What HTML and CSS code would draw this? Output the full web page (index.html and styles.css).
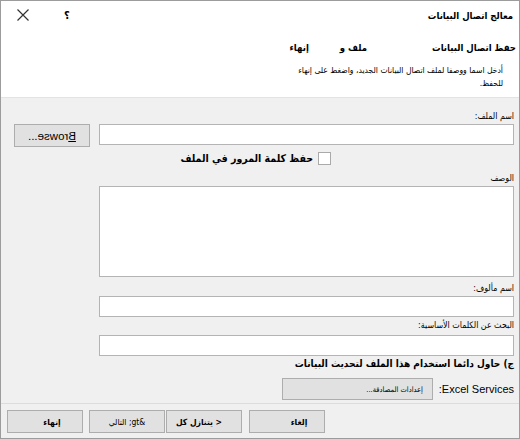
FILE: index.html
```html
<!DOCTYPE html>
<html lang="ar" dir="rtl">
<head>
<meta charset="utf-8">
<link rel="stylesheet" href="styles.css">
</head>
<body>
<div class="dialog">
  <div class="header">
    <div class="titlebar">
      <span class="title">معالج اتصال البيانات</span>
      <span class="help">؟</span>
      <span class="close">
        <svg width="12" height="12" viewBox="0 0 12 12"><path d="M0.5 0.5 L11.5 11.5 M11.5 0.5 L0.5 11.5" stroke="#333" stroke-width="1.2" fill="none"/></svg>
      </span>
    </div>
    <div class="steps">
      <span class="step step-main">حفظ اتصال البيانات</span>
      <span class="step step-file">ملف و</span>
      <span class="step step-end">إنهاء</span>
    </div>
    <p class="desc">أدخل اسما ووصفا لملف اتصال البيانات الجديد، واضغط على إنهاء<br>للحفظ.</p>
  </div>
  <div class="body">
    <label class="lbl lbl-file">اسم الملف:</label>
    <div class="file-row">
      <input class="field" type="text">
      <button class="btn browse"><span class="mirror"><u>B</u>rowse...</span></button>
    </div>
    <div class="check-row">
      <span class="checkbox"></span>
      <span class="check-label">حفظ كلمة المرور في الملف</span>
    </div>
    <label class="lbl lbl-desc">الوصف</label>
    <div class="field area"></div>
    <label class="lbl lbl-friendly">اسم مألوف:</label>
    <input class="field" type="text">
    <label class="lbl lbl-search">البحث عن الكلمات الأساسية:</label>
    <input class="field" type="text">
    <div class="always">ج) حاول دائما استخدام هذا الملف لتحديث البيانات</div>
    <div class="excel-row">
      <span class="excel-label">Excel Services:</span>
      <button class="btn auth">إعدادات المصادقة...</button>
    </div>
  </div>
  <div class="footer">
    <button class="btn fbtn fbtn-cancel">إلغاء</button>
    <button class="btn fbtn fbtn-back">&lt; يتنازل كل</button>
    <button class="btn fbtn fbtn-next">&amp;gt; التالي</button>
    <button class="btn fbtn fbtn-finish">إنهاء</button>
  </div>
</div>
</body>
</html>
```
FILE: styles.css
```css
* { box-sizing: border-box; }
html, body { margin: 0; padding: 0; }
body {
  width: 520px;
  height: 439px;
  background: #f0f0f0;
  font-family: "DejaVu Sans Condensed", "DejaVu Sans", sans-serif;
  font-size: 9px;
  color: #000;
}
.dialog {
  width: 520px;
  height: 439px;
  border: 1px solid #9c9c9c;
  background: #f0f0f0;
  display: flex;
  flex-direction: column;
  direction: rtl;
}
.header {
  background: #fff;
  height: 97px;
  flex: none;
  border-bottom: 1px solid #e3e3e3;
  padding: 0 3px 0 6px;
}
.titlebar {
  display: flex;
  align-items: center;
  height: 28px;
}
.title {
  font-weight: bold;
  font-size: 9.5px;
  flex: 1;
  padding-right: 3px;
}
.help {
  font-size: 11px;
  font-weight: bold;
  margin-left: 35px;
}
.close {
  display: flex;
  margin-left: 10px;
}
.steps {
  display: flex;
  align-items: center;
  height: 36px;
  font-weight: bold;
  font-size: 9.5px;
}
.step-main { margin-left: 65px; }
.step-file { margin-left: 31px; }
.desc {
  margin: -1px 0 0;
  padding-right: 13px;
  font-size: 8.5px;
  line-height: 13px;
}
.body {
  flex: 1;
  padding: 11px 5px 0 0;
  display: flex;
  flex-direction: column;
  align-items: flex-start;
}
.lbl {
  display: block;
  font-size: 8.8px;
  height: 14px;
  line-height: 14px;
  margin-bottom: 1px;
}
.lbl-desc { margin-top: 2px; }
.lbl-friendly { margin-top: 4px; }
.lbl-search { margin-top: 1px; margin-bottom: 3px; }
.field {
  width: 415px;
  height: 21px;
  border: 1px solid #b4b4b4;
  background: #fff;
  padding: 0;
  margin: 0;
  font: inherit;
  outline: none;
  flex: none;
}
.area { height: 91px; }
.file-row {
  display: flex;
  align-items: flex-start;
  gap: 9px;
  height: 23px;
}
.btn {
  font: inherit;
  font-size: 8.5px;
  background: #e1e1e1;
  border: 1px solid #adadad;
  color: #000;
  padding: 0;
  margin: 0;
}
.browse {
  width: 76px;
  height: 23px;
}
.mirror {
  display: inline-block;
  direction: ltr;
  transform: scaleX(-1);
  font-family: "Liberation Sans", sans-serif;
  font-size: 11.5px;
}
.check-row {
  display: flex;
  align-items: center;
  height: 22px;
  padding-right: 183px;
  gap: 5px;
}
.checkbox {
  width: 13px;
  height: 13px;
  border: 1px solid #aaa;
  background: #fff;
}
.check-label {
  font-weight: bold;
  font-size: 10.5px;
}
.always {
  font-weight: bold;
  font-size: 10px;
  height: 16px;
  line-height: 16px;
}
.excel-row {
  display: flex;
  align-items: center;
  gap: 5px;
  margin-top: 6px;
}
.excel-label {
  width: 76px;
  text-align: right;
  font-family: "Liberation Sans", sans-serif;
  font-size: 11px;
}
.auth {
  width: 151px;
  height: 22px;
  text-align: right;
  padding-right: 9px;
  font-size: 7.5px;
}
.footer {
  height: 35px;
  flex: none;
  border-top: 1px solid #dcdcdc;
  display: flex;
  padding: 6px 194px 0 0;
  gap: 1px;
}
.fbtn {
  width: 76px;
  height: 23px;
  font-weight: bold;
}
.fbtn-cancel { margin-left: 6px; padding-left: 24px; }
.fbtn-back { padding-right: 10px; }
.fbtn-next { margin-left: 5px; font-weight: normal; }
.fbtn-finish { padding-left: 14px; }
```
